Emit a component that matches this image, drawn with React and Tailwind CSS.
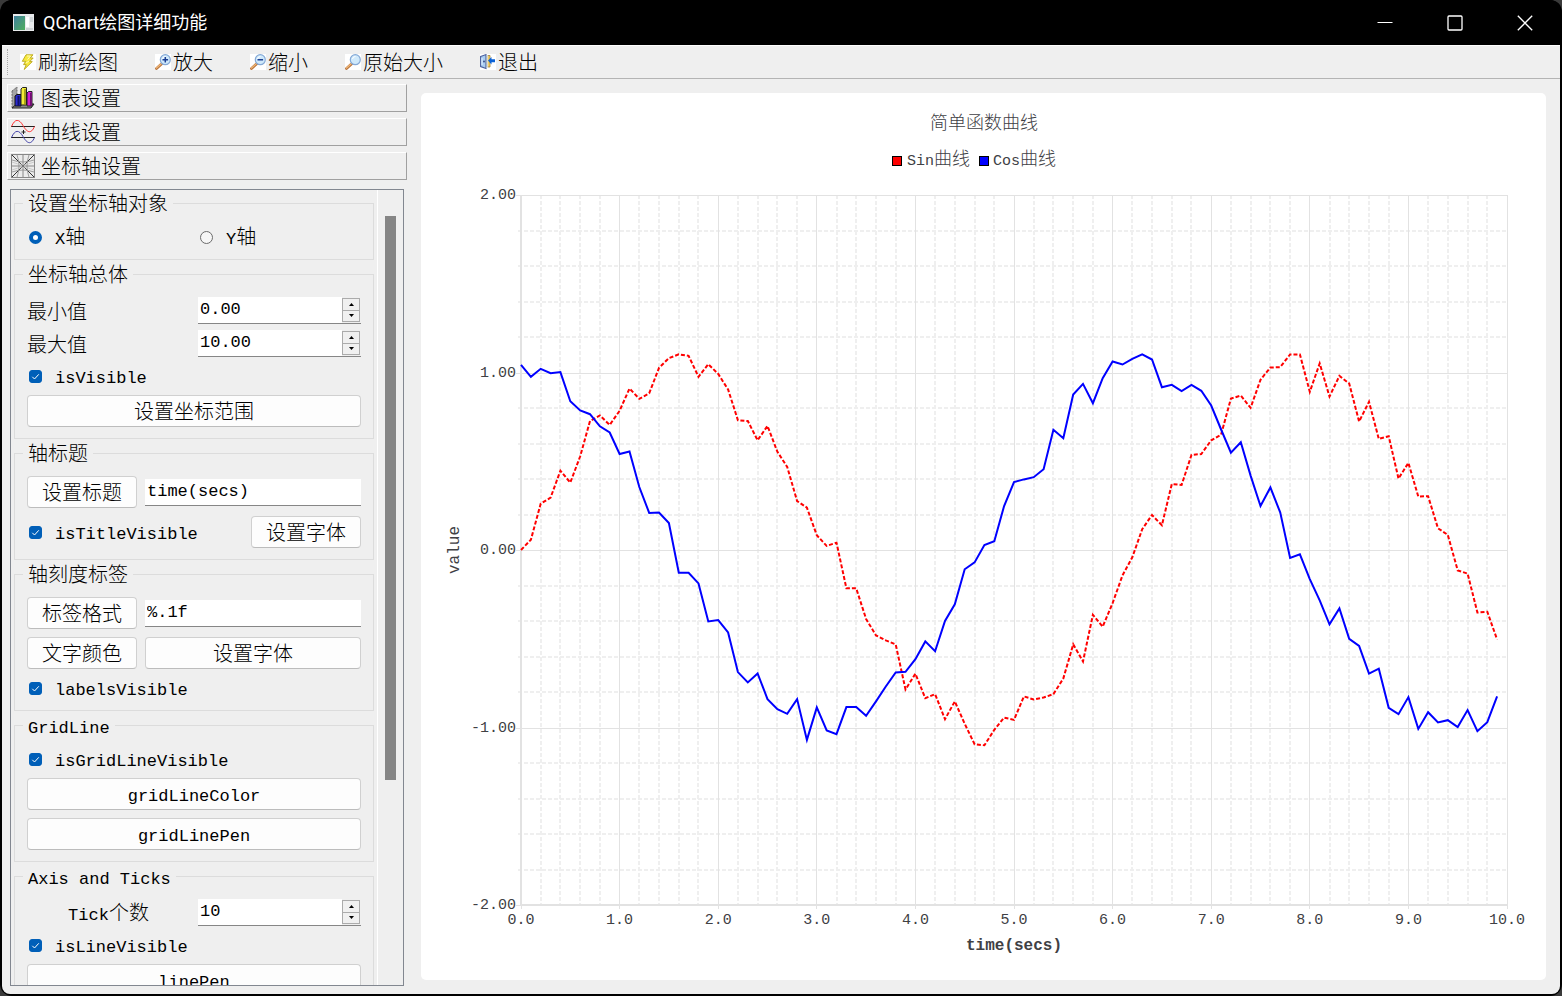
import clsx from "clsx";

const SIN = [
    0, 0.058, 0.261, 0.295, 0.447, 0.38, 0.528, 0.727, 0.758, 0.705, 0.784, 0.91, 0.852, 0.883, 1.026, 1.081, 1.102, 1.094, 0.976, 1.047,
    0.992, 0.904, 0.731, 0.727, 0.618, 0.699, 0.553, 0.468, 0.276, 0.239, 0.083, 0.023, 0.041, -0.216, -0.216, -0.389, -0.481, -0.509, -0.532, -0.786,
    -0.697, -0.835, -0.812, -0.953, -0.853, -0.979, -1.094, -1.1, -1.013, -0.944, -0.957, -0.825, -0.842, -0.831, -0.812, -0.724, -0.532, -0.628, -0.365, -0.432,
    -0.299, -0.143, -0.041, 0.117, 0.197, 0.139, 0.372, 0.367, 0.536, 0.541, 0.618, 0.65, 0.853, 0.87, 0.801, 0.959, 1.028, 1.03, 1.102, 1.102,
    0.891, 1.051, 0.865, 0.981, 0.938, 0.724, 0.835, 0.626, 0.641, 0.402, 0.491, 0.301, 0.303, 0.122, 0.085, -0.115, -0.133, -0.352, -0.348, -0.504,
];

const COS = [
    1.043, 0.976, 1.021, 0.996, 1.002, 0.838, 0.786, 0.765, 0.697, 0.662, 0.541, 0.555, 0.355, 0.209, 0.211, 0.152, -0.128, -0.128, -0.188, -0.402,
    -0.395, -0.464, -0.688, -0.746, -0.695, -0.84, -0.897, -0.923, -0.84, -1.07, -0.887, -1.017, -1.038, -0.885, -0.885, -0.934, -0.853, -0.769, -0.69, -0.686,
    -0.615, -0.515, -0.57, -0.4, -0.306, -0.109, -0.07, 0.028, 0.049, 0.248, 0.383, 0.398, 0.41, 0.455, 0.677, 0.63, 0.876, 0.936, 0.827, 0.968,
    1.062, 1.045, 1.077, 1.102, 1.073, 0.917, 0.93, 0.895, 0.93, 0.897, 0.814, 0.679, 0.549, 0.607, 0.419, 0.248, 0.352, 0.212, -0.045, -0.024,
    -0.164, -0.284, -0.419, -0.329, -0.5, -0.541, -0.697, -0.669, -0.889, -0.925, -0.829, -1.008, -0.914, -0.972, -0.959, -0.998, -0.902, -1.021, -0.97, -0.825,
];

// plot area inside the 1125 x 887 chart card
const LEFT = 100;
const RIGHT = 1086;
const TOP = 102;
const BOTTOM = 812;

const px = (v) => LEFT + (v / 10) * (RIGHT - LEFT);
const py = (v) => TOP + ((2 - v) / 4) * (BOTTOM - TOP);
const toPoints = (data) => data.map((v, i) => `${px(i / 10).toFixed(1)},${py(v).toFixed(1)}`).join(" ");

// latin runs are monospaced and half as wide as a chinese character
const Txt = ({ children }) => (
    <span>
        {children
            .split(/([\u4e00-\u9fff]+)/)
            .filter(Boolean)
            .map((part, i) =>
                /[\u4e00-\u9fff]/.test(part) ? (
                    part
                ) : (
                    <span key={i} className="font-['Liberation_Mono',monospace] text-[17px] leading-none">
                        {part}
                    </span>
                )
            )}
    </span>
);

const AppIcon = () => (
    <svg className="h-[17px] w-[21px]" viewBox="0 0 21 17">
        <defs>
            <linearGradient id="app-green" x1="0" y1="0" x2="1" y2="1">
                <stop offset="0" stopColor="#3f7f9f" />
                <stop offset="1" stopColor="#4fae5c" />
            </linearGradient>
        </defs>
        <rect width="21" height="17" fill="#e8eaec" />
        <rect x="1" y="2" width="11" height="14" fill="url(#app-green)" />
        <rect x="13" y="3" width="3" height="10" fill="#fff" />
        <rect x="17" y="3" width="3" height="5" fill="#cfd5d8" />
        <rect x="13" y="14" width="7" height="2" fill="#cdd2d4" />
    </svg>
);

const FlashIcon = () => (
    <svg className="size-4 bg-white" viewBox="0 0 16 16">
        <path d="M6 .8h7L10.300 4h2.900L9.700 7.600h2.600L4.200 15.500l2-4.900H3.600l2-3.300H2.300z" fill="#f7e93c" stroke="#b9a61d" strokeWidth=".9" strokeLinejoin="round" />
        <path d="M7 2h3.500L7.500 5.600M6 9l3-2" fill="none" stroke="#fffbb8" />
    </svg>
);

const ZoomIcon = ({ sign }) => (
    <svg className="size-4 bg-white" viewBox="0 0 16 16">
        <path d="M7 9.500 1.500 14.500" stroke="#b8733c" strokeWidth="2.800" strokeLinecap="round" />
        <path d="M6.500 9.500 1.500 14" stroke="#f0b878" strokeWidth="1.200" strokeLinecap="round" />
        <circle cx="10.300" cy="5.700" r="5" fill="#cfe9fb" stroke="#85a9d6" strokeWidth="1.200" />
        <path d="M7.500 5a3 3 0 0 1 3-2.500" stroke="#fff" fill="none" />
        {sign && <path d="M7.500 5.700h5.600" stroke="#1c3f93" strokeWidth="1.500" />}
        {sign === "+" && <path d="M10.300 2.900v5.600" stroke="#1c3f93" strokeWidth="1.500" />}
    </svg>
);

const ExitIcon = () => (
    <svg className="size-4 bg-white" viewBox="0 0 16 16">
        <path d="M7 1.500h3v11.500H7z" fill="#f3cf68" stroke="#9c8240" strokeWidth=".8" />
        <path d="M.6 2.500 6 .6v13.800L.6 12.500z" fill="#a9cdf2" stroke="#4a5f9c" strokeWidth="1.100" />
        <path d="M2 4v7M7.200 1v13" stroke="#e3f1ff" />
        <circle cx="4" cy="7.500" r=".9" fill="#33447e" />
        <path d="M8 6.500 11.500 3v2.200H15v3h-3.500v2.300z" fill="#0b62d6" />
    </svg>
);

const BarsIcon = () => (
    <svg className="size-6" viewBox="0 0 24 24">
        <path d="M1 5 6 1v17l-5 4z" fill="#a5a5a5" stroke="#555" strokeWidth=".8" strokeDasharray="2 1" />
        <path d="M1 22l5-4h17l-3 4z" fill="#8b8b8b" stroke="#222" />
        <path d="M4 10l2-1.500h4V20H4z" fill="#2b2bd0" stroke="#111" />
        <path d="M7.500 10v10" stroke="#10106a" strokeWidth="2" />
        <path d="M10 3l1.500-1.500h4V19H10z" fill="#f4ee35" stroke="#222" />
        <path d="M14 3v16" stroke="#8f8a12" strokeWidth="1.500" />
        <path d="M16 7l1.500-1.500H21V20h-5z" fill="#d21fd0" stroke="#222" />
        <path d="M19.800 7v13" stroke="#6f0b6e" strokeWidth="1.500" />
    </svg>
);

const WavesIcon = () => (
    <svg className="size-6" viewBox="0 0 24 24" fill="none">
        <path d="M0 6.500h24M0 17.500h24" stroke="#222" />
        <path d="M12.500 10v4M10.500 12h4" stroke="#222" />
        <path d="M.5 6.500C4-1.500 8-1.500 12 5.500s8 9 11.500 1" stroke="#f33" />
        <path d="M.5 17.500c3.500-8 7.500-8 11.500-1s8 9 11.500 1" stroke="#44a" />
    </svg>
);

const AxesIcon = () => (
    <svg className="size-6" viewBox="0 0 24 24" fill="none">
        <rect x=".5" y=".5" width="23" height="23" fill="#ebebeb" stroke="#888" />
        <path d="M1 1l22 22M23 1 1 23" stroke="#333" />
        <path d="M12 1v22M1 12h22" stroke="#888" />
        <path d="M6 1q4 11 0 22M18 1q-4 11 0 22M1 6q11 4 22 0M1 18q11-4 22 0" stroke="#888" strokeWidth=".8" />
        <path d="M1 8q11 5 22 0M1 16q11-5 22 0" stroke="#bbb" strokeWidth=".7" />
    </svg>
);

const TitleBar = () => (
    <header className="flex h-[45px] shrink-0 items-center bg-black pl-[11px] text-white">
        <AppIcon />
        <h1 className="ml-[9px] font-['Roboto','Noto_Sans_CJK_SC',sans-serif] text-[18px] leading-6 font-normal">QChart绘图详细功能</h1>
        <div className="ml-auto flex h-full">
            <button aria-label="minimize" className="flex w-[70px] items-center justify-center">
                <svg className="size-4" viewBox="0 0 16 16">
                    <path d="M.5 7.500h15" stroke="#fff" />
                </svg>
            </button>
            <button aria-label="maximize" className="flex w-[70px] items-center justify-center">
                <svg className="size-4" viewBox="0 0 16 16">
                    <rect x="1" y="1" width="14" height="14" rx="1" fill="none" stroke="#fff" strokeWidth="1.300" />
                </svg>
            </button>
            <button aria-label="close" className="flex w-[70px] items-center justify-center">
                <svg className="size-4" viewBox="0 0 16 16">
                    <path d="M.8.8l14.400 14.400M15.200.8.8 15.200" stroke="#fff" strokeWidth="1.300" />
                </svg>
            </button>
        </div>
    </header>
);

const ToolButton = ({ icon, text }) => (
    <button className="flex items-center gap-0.5">
        {icon}
        <span>{text}</span>
    </button>
);

const ToolBar = () => (
    <nav className="flex h-[34px] shrink-0 items-center gap-[37px] border-t border-b border-t-white border-b-[#b4b4b4] pl-[5px]">
        <div className="flex items-center gap-3">
            <span className="h-[26px] border-l border-dotted border-[#a8a8a8]" />
            <ToolButton icon={<FlashIcon />} text="刷新绘图" />
        </div>
        <ToolButton icon={<ZoomIcon sign="+" />} text="放大" />
        <ToolButton icon={<ZoomIcon sign="-" />} text="缩小" />
        <ToolButton icon={<ZoomIcon />} text="原始大小" />
        <ToolButton icon={<ExitIcon />} text="退出" />
    </nav>
);

const PageTab = ({ icon, text }) => (
    <button className="flex h-7 shrink-0 items-center gap-1.5 border border-t-white border-r-[#a0a0a0] border-b-[#a0a0a0] border-l-white pl-[3px]">
        {icon}
        <span>{text}</span>
    </button>
);

const Group = ({ title, children }) => (
    <fieldset className="min-w-0 shrink-0 border border-[#dcdcdc] px-3 pt-3 pb-[11px]">
        <legend className="-ml-1 h-[21px] px-[5px]">
            <Txt>{title}</Txt>
        </legend>
        <div className="flex flex-col gap-2">{children}</div>
    </fieldset>
);

const Button = ({ children, className }) => (
    <button className={clsx("h-8 shrink-0 rounded border border-[#d0d0d0] border-b-[#bcbcbc] bg-[#fdfdfd]", className)}>
        <Txt>{children}</Txt>
    </button>
);

const Check = ({ text }) => (
    <label className="flex h-[22px] items-center gap-[13px] pl-0.5">
        <span className="grid size-[13px] shrink-0">
            <input type="checkbox" defaultChecked className="col-start-1 row-start-1 size-[13px] appearance-none rounded-[3px] border border-[#005fb8] checked:bg-[#005fb8]" />
            <svg className="pointer-events-none col-start-1 row-start-1 size-[13px]" viewBox="0 0 13 13">
                <path d="M3.300 6.800 5.500 9l4.300-4.700" fill="none" stroke="#fff" strokeWidth="1" />
            </svg>
        </span>
        <Txt>{text}</Txt>
    </label>
);

const Radio = ({ text, checked }) => (
    <label className="flex h-[22px] items-center gap-[13px] pl-0.5">
        <input
            type="radio"
            name="axis"
            defaultChecked={checked}
            className="size-[13px] shrink-0 appearance-none rounded-full border border-[#6b6b6b] bg-[#f6f6f6] checked:border-4 checked:border-[#005fb8] checked:bg-white"
        />
        <Txt>{text}</Txt>
    </label>
);

const Spin = ({ id, label, value, center }) => (
    <div className="grid h-[27px] grid-cols-2 items-center gap-2">
        <label htmlFor={id} className={clsx(center && "text-center")}>
            <Txt>{label}</Txt>
        </label>
        <div className="flex h-[27px] border-b border-[#868686]">
            <input id={id} defaultValue={value} className="min-w-0 flex-1 bg-white pl-0.5 font-['Liberation_Mono',monospace] text-[17px] outline-none" />
            <div className="my-px mr-px flex w-[18px] flex-col border border-[#ababab] bg-[#f0f0f0]">
                <button aria-label="up" className="flex flex-1 items-center justify-center border-b border-[#ababab]">
                    <svg className="h-[3px] w-[5px]" viewBox="0 0 5 3">
                        <path d="M0 3h5L2.500 0z" />
                    </svg>
                </button>
                <button aria-label="down" className="flex flex-1 items-center justify-center">
                    <svg className="h-[3px] w-[5px]" viewBox="0 0 5 3">
                        <path d="M0 0h5L2.500 3z" />
                    </svg>
                </button>
            </div>
        </div>
    </div>
);

const TextBox = ({ label, value }) => (
    <input
        aria-label={label}
        defaultValue={value}
        className="h-[27px] min-w-0 flex-1 border-b border-[#868686] bg-white pl-0.5 font-['Liberation_Mono',monospace] text-[17px] outline-none"
    />
);

const AxisPanel = () => (
    <div className="mx-[3px] mt-[9px] mb-2 flex min-h-0 flex-1 border border-[#828790]">
        <div className="flex min-w-0 flex-1 flex-col gap-1 overflow-hidden border-r border-white px-[3px] pt-[3px]">
            <Group title="设置坐标轴对象">
                <div className="grid grid-cols-2 gap-2">
                    <Radio text="X轴" checked />
                    <Radio text="Y轴" />
                </div>
            </Group>
            <Group title="坐标轴总体">
                <div className="flex flex-col gap-1.5">
                    <Spin id="axis-min" label="最小值" value="0.00" />
                    <Spin id="axis-max" label="最大值" value="10.00" />
                </div>
                <Check text="isVisible" />
                <Button>设置坐标范围</Button>
            </Group>
            <Group title="轴标题">
                <div className="flex items-center gap-2">
                    <Button className="w-[110px]">设置标题</Button>
                    <TextBox label="轴标题" value="time(secs)" />
                </div>
                <div className="flex items-center justify-between">
                    <Check text="isTitleVisible" />
                    <Button className="w-[110px]">设置字体</Button>
                </div>
            </Group>
            <Group title="轴刻度标签">
                <div className="flex items-center gap-2">
                    <Button className="w-[110px]">标签格式</Button>
                    <TextBox label="标签格式" value="%.1f" />
                </div>
                <div className="flex gap-2">
                    <Button className="w-[110px]">文字颜色</Button>
                    <Button className="flex-1">设置字体</Button>
                </div>
                <Check text="labelsVisible" />
            </Group>
            <Group title="GridLine">
                <Check text="isGridLineVisible" />
                <Button>gridLineColor</Button>
                <Button>gridLinePen</Button>
            </Group>
            <Group title="Axis and Ticks">
                <Spin id="tick-count" label="Tick个数" value="10" center />
                <Check text="isLineVisible" />
                <Button>linePen</Button>
            </Group>
        </div>
        <div className="flex w-[25px] flex-col items-center pt-[26px]">
            <div className="h-11/15 w-[11px] bg-[#858585]" />
        </div>
    </div>
);

const Chart = () => {
    const minorX = [...Array(51).keys()].filter((i) => i % 5);
    const minorY = [...Array(21).keys()].filter((i) => i % 5);

    return (
        <svg className="h-full w-full" viewBox="0 0 1125 887" role="img" aria-label="简单函数曲线">
            <g stroke="#efefef" strokeWidth="2" strokeDasharray="4 2" shapeRendering="crispEdges">
                {minorX.map((i) => (
                    <line key={i} x1={Math.round(px(i / 5))} x2={Math.round(px(i / 5))} y1={TOP} y2={BOTTOM} />
                ))}
                {minorY.map((i) => (
                    <line key={i} x1={LEFT - 3} x2={RIGHT} y1={Math.round(py(2 - i / 5))} y2={Math.round(py(2 - i / 5))} />
                ))}
            </g>
            <g stroke="#e2e2e2" shapeRendering="crispEdges">
                {[...Array(11).keys()].map((i) => (
                    <line key={i} x1={px(i)} x2={px(i)} y1={TOP} y2={BOTTOM + 4} />
                ))}
                {[2, 1, 0, -1, -2].map((v) => (
                    <line key={v} x1={LEFT - 5} x2={RIGHT} y1={py(v) + 0.5} y2={py(v) + 0.5} />
                ))}
                <line x1={LEFT} x2={LEFT} y1={TOP} y2={BOTTOM} strokeWidth="2" />
                <line x1={LEFT} x2={RIGHT} y1={BOTTOM} y2={BOTTOM} strokeWidth="2" />
            </g>

            <polyline points={toPoints(SIN)} fill="none" stroke="#f00" strokeWidth="2" strokeDasharray="4 2" />
            <polyline points={toPoints(COS)} fill="none" stroke="#00f" strokeWidth="2" />

            <g fill="#404044" className="font-['Liberation_Mono','Noto_Sans_CJK_SC',monospace] text-[15px]">
                <text x="563" y="36" textAnchor="middle" className="text-[18px] font-light">
                    简单函数曲线
                </text>
                <rect x="471.500" y="63.500" width="9" height="9" fill="#f00" stroke="#000" />
                <text x="486" y="72">
                    Sin<tspan className="text-[18px] font-light">曲线</tspan>
                </text>
                <rect x="558.500" y="63.500" width="9" height="9" fill="#00f" stroke="#000" />
                <text x="572" y="72">
                    Cos<tspan className="text-[18px] font-light">曲线</tspan>
                </text>
                {[2, 1, 0, -1, -2].map((v) => (
                    <text key={v} x={LEFT - 5} y={py(v) + 4} textAnchor="end">
                        {v.toFixed(2)}
                    </text>
                ))}
                {[...Array(11).keys()].map((i) => (
                    <text key={i} x={px(i)} y={BOTTOM + 19} textAnchor="middle">
                        {i.toFixed(1)}
                    </text>
                ))}
                <text x="593" y="857" textAnchor="middle" className="text-[16px] font-bold">
                    time(secs)
                </text>
                <text x="38" y="457" textAnchor="middle" transform="rotate(-90 38 457)" className="text-[16px]">
                    value
                </text>
            </g>
        </svg>
    );
};

const App = () => {
    return (
        <div className="h-screen bg-[#3a3a3a] text-black">
            <div className="flex h-full flex-col overflow-hidden rounded-xl bg-black px-0.5 pb-0.5 font-['Noto_Sans_CJK_SC',sans-serif] text-[20px] leading-5 font-light">
                <TitleBar />
                <div className="flex min-h-0 flex-1 flex-col overflow-hidden rounded-b-lg bg-[#efefef]">
                    <ToolBar />
                    <main className="flex min-h-0 flex-1">
                        <aside className="ml-[5px] flex w-[400px] shrink-0 flex-col pt-[5px]">
                            <div className="flex flex-col gap-1.5">
                                <PageTab icon={<BarsIcon />} text="图表设置" />
                                <PageTab icon={<WavesIcon />} text="曲线设置" />
                                <PageTab icon={<AxesIcon />} text="坐标轴设置" />
                            </div>
                            <AxisPanel />
                        </aside>
                        <section className="m-3.5 min-w-0 flex-1 rounded-[5px] bg-white">
                            <Chart />
                        </section>
                    </main>
                </div>
            </div>
        </div>
    );
};

export default App;
